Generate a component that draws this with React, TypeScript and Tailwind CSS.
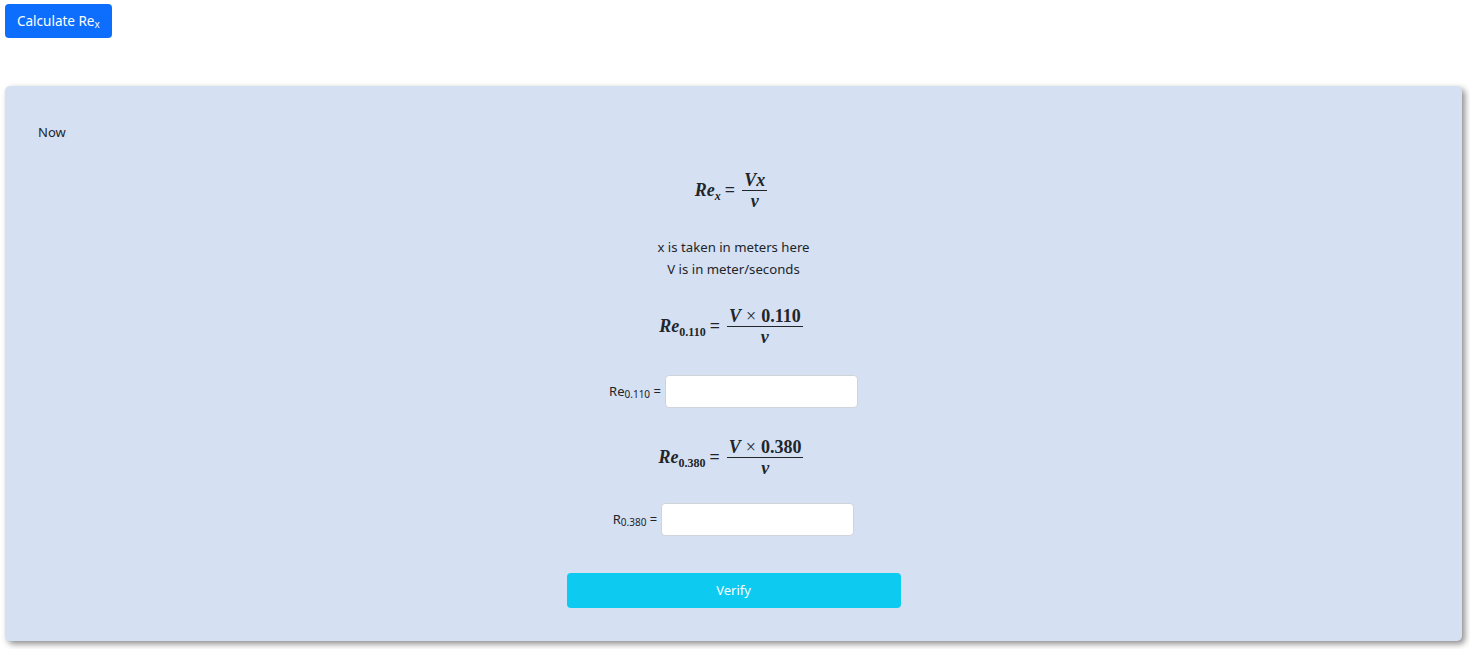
import type { ReactNode } from "react";

const Frac = ({ num, den }: { num: ReactNode; den: ReactNode }) => (
    <span className="inline-flex flex-col items-center align-middle mx-[5px]">
        <span className="px-[2px] leading-[20px]">{num}</span>
        <span className="h-px w-full bg-[#212529]" />
        <span className="leading-[20px]">{den}</span>
    </span>
);

const MathLine = ({ sub, value }: { sub: ReactNode; value?: string }) => (
    <div className="flex items-center justify-center text-[18px] font-bold text-[#212529] [font-family:'Liberation_Serif',serif]">
        <span className="italic">Re</span>
        <span className="text-[12px] self-end mb-[6px] mr-[4px]">{sub}</span>
        <span className="mr-[2px]">=</span>
        <Frac
            num={
                value ? (
                    <>
                        <span className="italic">V</span>
                        <span className="font-normal mx-[5px]">×</span>
                        <span>{value}</span>
                    </>
                ) : (
                    <span className="italic">Vx</span>
                )
            }
            den={<span className="italic">ν</span>}
        />
    </div>
);

const Field = ({ label, sub }: { label: string; sub: string }) => (
    <div className="flex items-center justify-center">
        <span className="text-[13px] text-[#212529] mr-[4px]">
            {label}
            <sub className="text-[10px]">{sub}</sub> =
        </span>
        <input className="w-[193px] h-[33px] rounded-[4px] border border-[#ced4da] bg-white" />
    </div>
);

export default function App() {
    return (
        <div className="min-h-[649px] bg-white [font-family:'Noto_Sans',sans-serif]">
            <div className="pt-[4px] pl-[5px]">
                <button className="h-[34px] px-[12px] rounded-[4px] bg-[#0d6efd] text-white text-[13.5px]">
                    Calculate Re<sub className="text-[10px]">x</sub>
                </button>
            </div>

            <div className="mt-[48px] ml-[5px] w-[1457px] h-[555px] rounded-[5px] bg-[#d5e0f2] shadow-[3px_3px_6px_rgba(0,0,0,0.45)] pt-[36px] px-[33px]">
                <p className="text-[13px] leading-[20px] text-[#212529]">Now</p>

                <div className="mt-[28px]">
                    <MathLine sub={<span className="italic">x</span>} />
                </div>

                <div className="mt-[25px] text-center text-[13.2px] leading-[22px] text-[#212529]">
                    <p>x is taken in meters here</p>
                    <p>V is in meter/seconds</p>
                </div>

                <div className="mt-[26px]">
                    <MathLine sub="0.110" value="0.110" />
                </div>

                <div className="mt-[28px]">
                    <Field label="Re" sub="0.110" />
                </div>

                <div className="mt-[29px]">
                    <MathLine sub="0.380" value="0.380" />
                </div>

                <div className="mt-[25px]">
                    <Field label="R" sub="0.380" />
                </div>

                <div className="mt-[37px] flex justify-center">
                    <button className="w-[334px] h-[35px] rounded-[4px] bg-[#0dcaf0] text-white text-[13px]">Verify</button>
                </div>
            </div>
        </div>
    );
}
